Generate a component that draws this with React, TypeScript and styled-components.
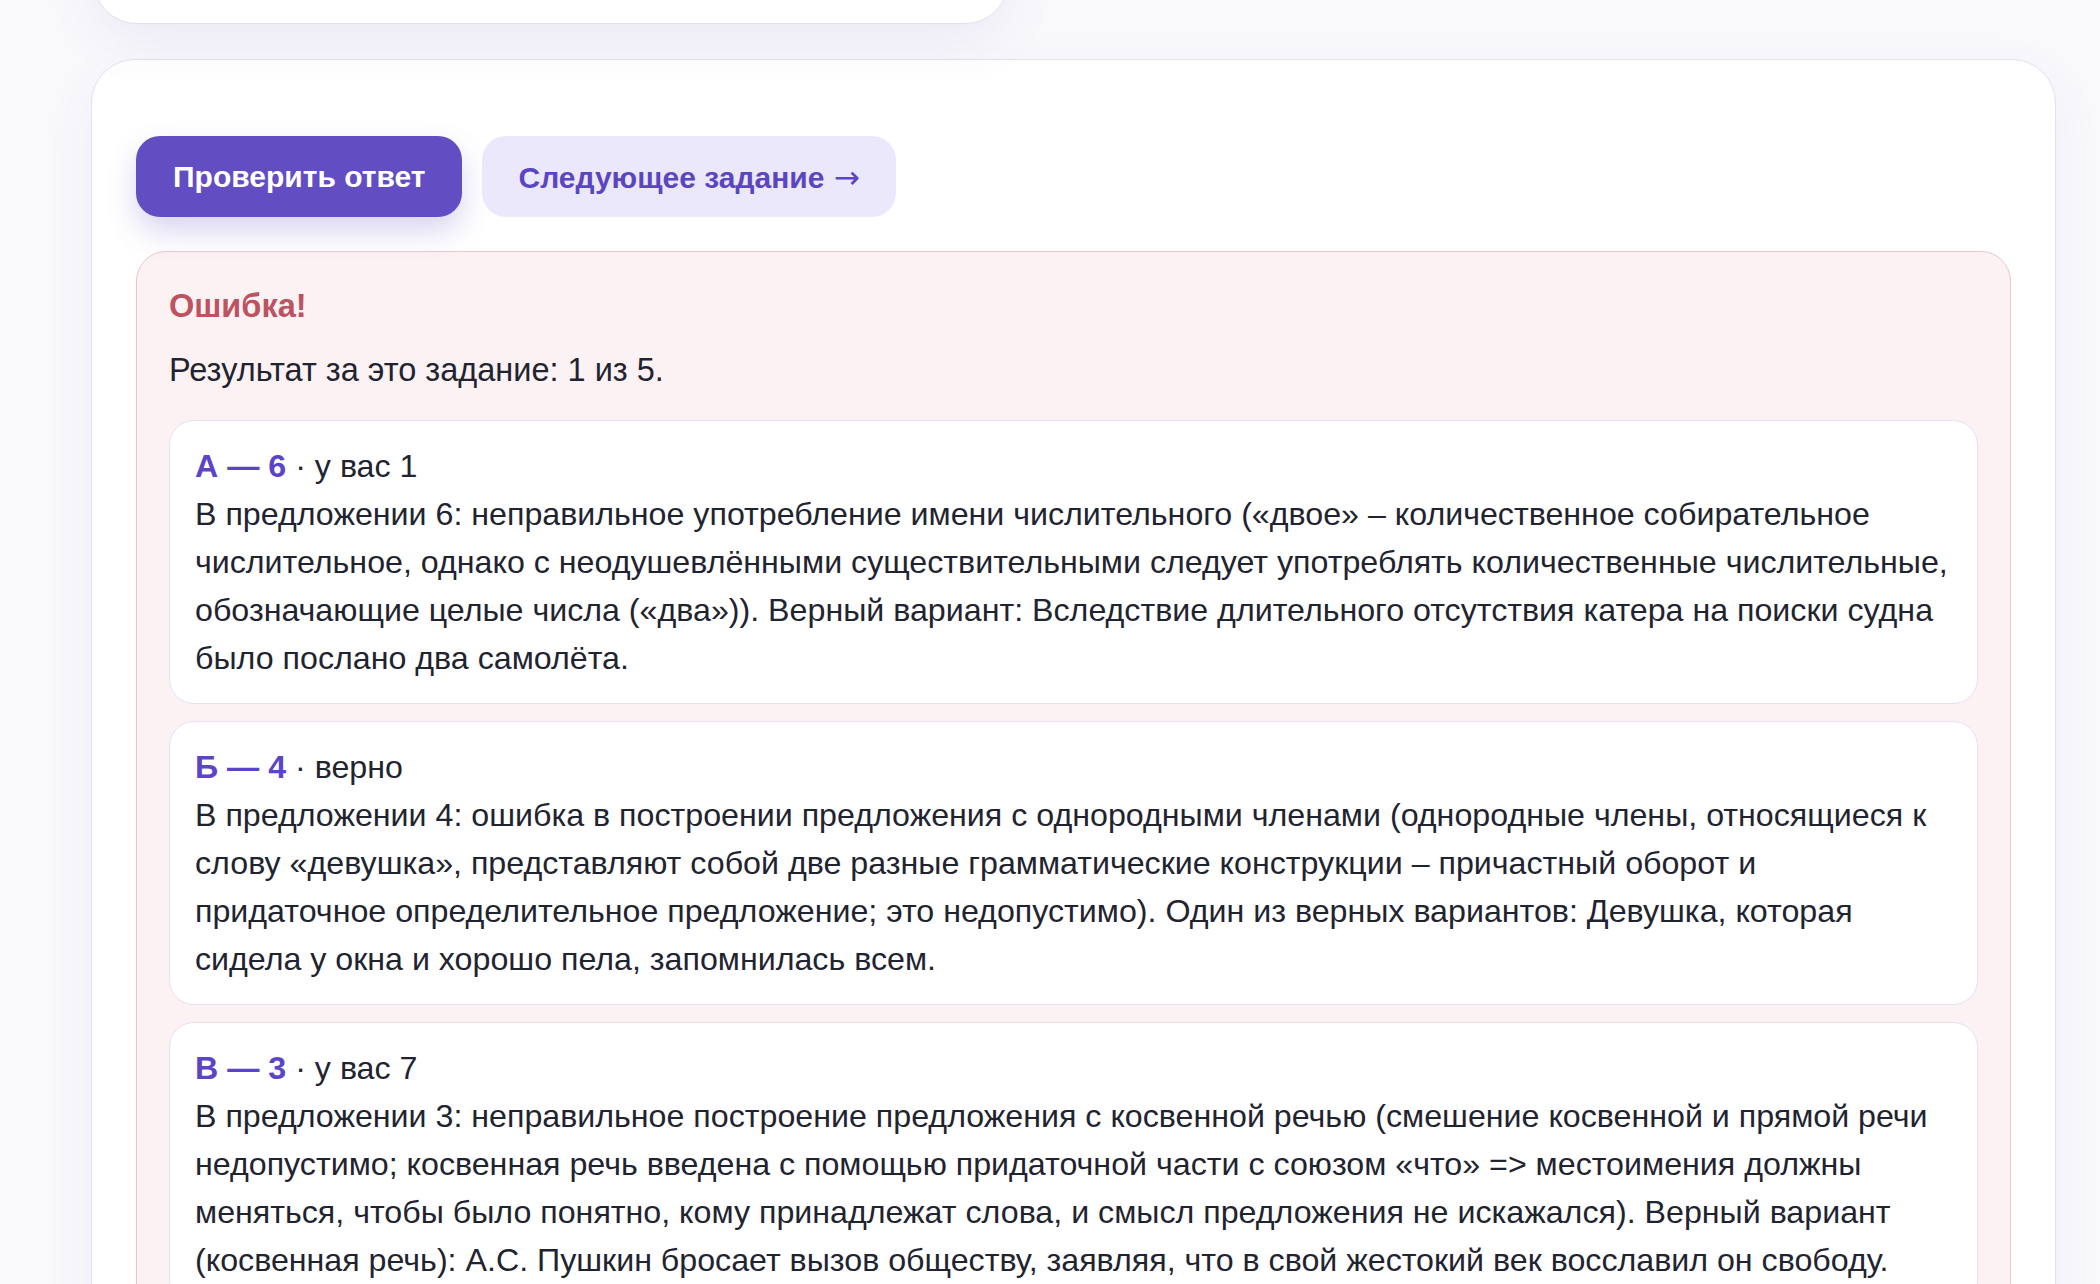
import React from 'react';
import styled, { createGlobalStyle } from 'styled-components';

const GlobalStyle = createGlobalStyle`
	* {
		box-sizing: border-box;
	}

	body {
		margin: 0;
		background: #f9f9fc;
		font-family: 'Liberation Sans', Arial, Helvetica, sans-serif;
		color: #1f2430;
	}
`;

const Page = styled.div`
	padding: 0 44px 60px 91px;
	overflow: hidden;
`;

const TopRow = styled.div`
	display: flex;
	margin-bottom: 35px;
`;

const PrevCard = styled.div`
	width: 916px;
	height: 140px;
	margin-top: -116px;
	margin-left: 2px;
	background: #fff;
	border: 1px solid #e3e0f2;
	border-radius: 44px;
	box-shadow: 0 18px 50px rgba(98, 84, 180, 0.09);
`;

const Card = styled.section`
	background: #fff;
	border: 1px solid #e3e0f2;
	border-radius: 44px;
	padding: 76px 44px 44px;
	box-shadow: 0 18px 50px rgba(98, 84, 180, 0.07);
`;

const Actions = styled.div`
	display: flex;
	gap: 20px;
	margin-bottom: 34px;
`;

const Button = styled.button<{ $primary?: boolean }>`
	height: 81px;
	padding: 0 ${(p) => (p.$primary ? '37px' : '36px')};
	border: none;
	border-radius: 24px;
	font-family: inherit;
	font-size: 30px;
	font-weight: 700;
	cursor: pointer;
	background: ${(p) => (p.$primary ? '#634dc2' : '#ece8fc')};
	color: ${(p) => (p.$primary ? '#ffffff' : '#5b46c2')};
	box-shadow: ${(p) => (p.$primary ? '0 14px 30px rgba(99, 77, 194, 0.24)' : 'none')};
`;

const Arrow = styled.span`
	font-family: 'DejaVu Sans', sans-serif;
	font-weight: 400;
	font-size: 31px;
	margin-left: 1px;
`;

const ResultBox = styled.div`
	background: #fcf2f3;
	border: 1px solid #e9c8cc;
	border-radius: 30px;
	padding: 32px;
`;

const ResultTitle = styled.div`
	font-size: 32.5px;
	line-height: 44px;
	font-weight: 700;
	color: #bd5361;
	margin-bottom: 18px;
`;

const Summary = styled.p`
	margin: 0 0 26px;
	font-size: 32.5px;
	line-height: 48px;
`;

const Items = styled.div`
	display: flex;
	flex-direction: column;
	gap: 17px;
`;

const Item = styled.div`
	background: #fff;
	border: 1px solid #e4e1f4;
	border-radius: 25px;
	padding: 21px 25px;
	font-size: 32.2px;
	line-height: 48px;
`;

const Pair = styled.span`
	font-weight: 700;
	color: #5b45c6;
`;

const Line = styled.div`
	white-space: nowrap;
`;

const items = [
	{
		pair: 'А — 6',
		status: 'у вас 1',
		lines: [
			'В предложении 6: неправильное употребление имени числительного («двое» – количественное собирательное',
			'числительное, однако с неодушевлёнными существительными следует употреблять количественные числительные,',
			'обозначающие целые числа («два»)). Верный вариант: Вследствие длительного отсутствия катера на поиски судна',
			'было послано два самолёта.',
		],
	},
	{
		pair: 'Б — 4',
		status: 'верно',
		lines: [
			'В предложении 4: ошибка в построении предложения с однородными членами (однородные члены, относящиеся к',
			'слову «девушка», представляют собой две разные грамматические конструкции – причастный оборот и',
			'придаточное определительное предложение; это недопустимо). Один из верных вариантов: Девушка, которая',
			'сидела у окна и хорошо пела, запомнилась всем.',
		],
	},
	{
		pair: 'В — 3',
		status: 'у вас 7',
		lines: [
			'В предложении 3: неправильное построение предложения с косвенной речью (смешение косвенной и прямой речи',
			'недопустимо; косвенная речь введена с помощью придаточной части с союзом «что» => местоимения должны',
			'меняться, чтобы было понятно, кому принадлежат слова, и смысл предложения не искажался). Верный вариант',
			'(косвенная речь): А.С. Пушкин бросает вызов обществу, заявляя, что в свой жестокий век восславил он свободу.',
		],
	},
];

const App = () => {
	return (
		<>
			<GlobalStyle />
			<Page>
				<TopRow>
					<PrevCard />
				</TopRow>
				<Card>
					<Actions>
						<Button $primary>Проверить ответ</Button>
						<Button>
							Следующее задание <Arrow>→</Arrow>
						</Button>
					</Actions>
					<ResultBox>
						<ResultTitle>Ошибка!</ResultTitle>
						<Summary>Результат за это задание: 1 из 5.</Summary>
						<Items>
							{items.map((item) => (
								<Item key={item.pair}>
									<Line>
										<Pair>{item.pair}</Pair> · {item.status}
									</Line>
									{item.lines.map((line) => (
										<Line key={line}>{line}</Line>
									))}
								</Item>
							))}
						</Items>
					</ResultBox>
				</Card>
			</Page>
		</>
	);
};

export default App;
